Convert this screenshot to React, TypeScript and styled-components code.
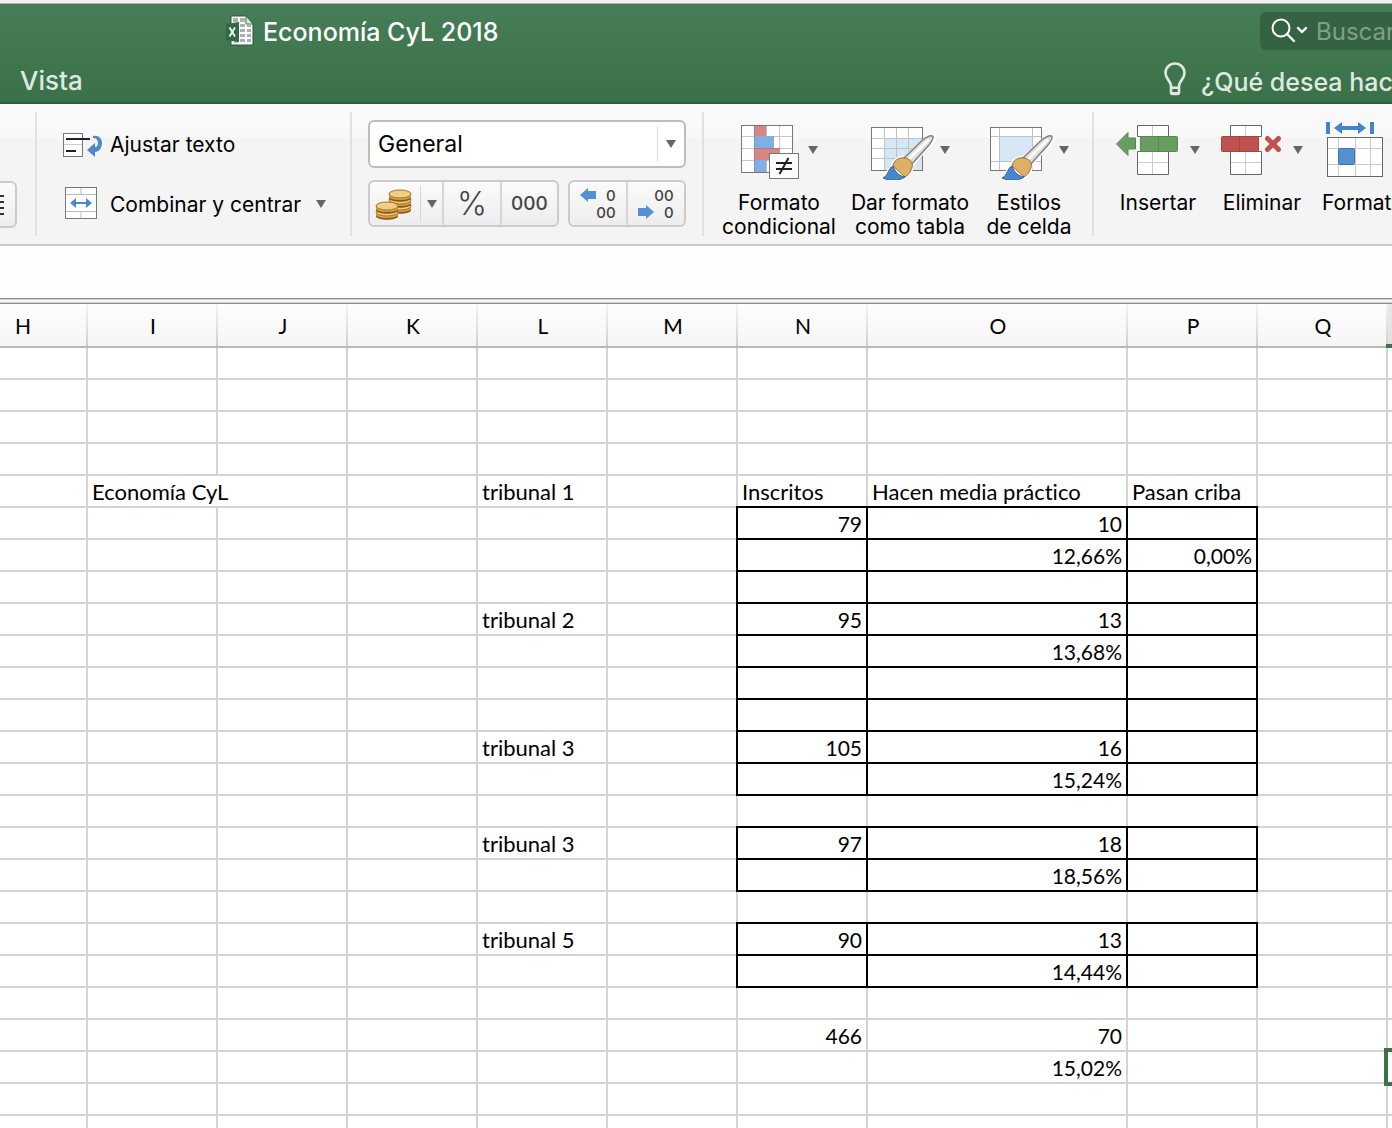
import React from "react";
import styled, { createGlobalStyle, css } from "styled-components";

const UI_FONT = `Inter, Roboto, "Liberation Sans", sans-serif`;
const SHEET_FONT = `Lato, "Open Sans", "Liberation Sans", sans-serif`;
const GRID = "#d4d4d4";
const EXCEL_GREEN = "#3c7349";

const GlobalStyle = createGlobalStyle`
  *, *::before, *::after { box-sizing: border-box; }
  body { margin: 0; background: #fff; overflow: hidden; }
  button, input, select { font: inherit; color: inherit; margin: 0; }
  svg { display: block; flex: none; }
`;

const Window = styled.div`
  display: flex;
  flex-direction: column;
  height: 100vh;
  overflow: hidden;
  font-family: ${UI_FONT};
  color: #000;
`;

/* ---------- title bar ---------- */

const Header = styled.header`
  flex: none;
  border-bottom: 2px solid #2d5c39;
  background: linear-gradient(#467e58, #3b7148);
  color: #fff;
  overflow: hidden;

  &::before {
    content: "";
    display: block;
    height: 4px;
    background: #f1f1f1;
    border-bottom: 1px solid #a9b5ac;
  }
`;

const TitleRow = styled.div`
  display: flex;
  align-items: center;
  height: 53px;
  padding-left: 226px;
`;

const Title = styled.h1`
  margin: 0 0 0 9px;
  padding-top: 2px;
  font-size: 25px;
  font-weight: 500;
  line-height: 32px;
  white-space: nowrap;
`;

const Search = styled.label`
  display: flex;
  align-items: center;
  flex: none;
  width: 132px;
  height: 38px;
  margin-left: auto;
  padding-left: 11px;
  border-radius: 6px 0 0 6px;
  background: #356342;
  overflow: hidden;
`;

const SearchInput = styled.input`
  width: 76px;
  margin-left: 8px;
  padding: 2px 0 0;
  border: 0;
  outline: 0;
  background: transparent;
  font-size: 24px;
  &::placeholder { color: #809f88; opacity: 1; }
`;

const TabRow = styled.div`
  display: flex;
  align-items: center;
  justify-content: space-between;
  height: 45px;
  padding-left: 20px;
`;

const Tab = styled.button`
  padding: 2px 0 0;
  border: 0;
  background: none;
  color: #dfe9e1;
  font-size: 26px;
  font-weight: 500;
  line-height: 32px;
`;

const TellMe = styled.button`
  display: flex;
  align-items: center;
  gap: 14px;
  width: 229px;
  padding: 0;
  border: 0;
  background: none;
  color: #dfe9e1;
  font-size: 25px;
  font-weight: 500;
  line-height: 32px;
  white-space: nowrap;
  overflow: hidden;
`;

const TellMeText = styled.span`
  padding-top: 4px;
`;

/* ---------- ribbon ---------- */

const Ribbon = styled.div`
  display: flex;
  flex: none;
  height: 142px;
  padding: 8px 0;
  border-bottom: 2px solid #cacaca;
  background: linear-gradient(#fafafa, #f8f8f8 33px, #f4f4f4 34px);
  overflow: hidden;
`;

const Group = styled.section<{ $width?: number; $pad?: number }>`
  flex: none;
  width: ${(p) => (p.$width ? `${p.$width}px` : "auto")};
  padding: 8px 0 0 ${(p) => p.$pad ?? 0}px;
  border-right: 2px solid #e1e1e1;
  &:last-child { border-right: 0; }
`;

const ClippedGroup = styled(Group)`
  display: flex;
  align-items: flex-end;
  justify-content: flex-end;
  padding: 0 18px 8px 0;
`;

const buttonFace = css`
  border: 2px solid #cbcbcb;
  border-radius: 6px;
  background: linear-gradient(#fbfbfb, #ededed);
`;

const AlignButton = styled.button`
  ${buttonFace}
  display: flex;
  align-items: center;
  justify-content: flex-end;
  flex: none;
  width: 58px;
  height: 47px;
  padding: 0 11px 0 0;
`;

const CommandRow = styled.button`
  display: grid;
  grid-template-columns: 47px auto auto;
  align-items: center;
  justify-content: start;
  height: 48px;
  margin-bottom: 12px;
  padding: 0;
  border: 0;
  background: none;
  font-size: 21px;
  line-height: 24px;
  white-space: nowrap;
`;

const CommandText = styled.span`
  padding-top: 2px;
`;

const RowArrow = styled.span`
  margin-left: 15px;
`;

const SelectBox = styled.label`
  position: relative;
  display: block;
  width: 318px;
  height: 48px;
  border: 2px solid #bdbdbd;
  border-radius: 6px;
  background: #fff;
`;

const FormatSelect = styled.select`
  width: 100%;
  height: 100%;
  padding: 0 40px 0 8px;
  border: 0;
  outline: 0;
  appearance: none;
  background: transparent;
  font-size: 23px;
`;

const SelectArrow = styled.span`
  position: absolute;
  top: 4px;
  right: 0;
  bottom: 4px;
  display: flex;
  align-items: center;
  width: 27px;
  padding-left: 8px;
  border-left: 1px solid #dcdcdc;
  pointer-events: none;
`;

const NumberRow = styled.div`
  display: flex;
  gap: 9px;
  margin-top: 12px;
`;

const Segments = styled.div`
  ${buttonFace}
  display: flex;
  height: 47px;
  overflow: hidden;
`;

const Segment = styled.button<{ $width: number; $percent?: boolean }>`
  display: flex;
  align-items: center;
  justify-content: center;
  width: ${(p) => p.$width}px;
  height: 100%;
  padding: 0;
  border: 0;
  border-left: 2px solid #d6d6d6;
  background: none;
  color: #444;
  font-size: ${(p) => (p.$percent ? 32 : 19)}px;
  font-weight: ${(p) => (p.$percent ? 300 : 500)};
  line-height: 24px;
  &:first-child { border-left: 0; }
`;

const MoneyDivider = styled.span`
  width: 1px;
  height: 36px;
  margin: 0 6px 0 8px;
  background: #d6d6d6;
`;

const Decimals = styled.span`
  display: grid;
  grid-template-columns: 16px auto;
  column-gap: 0;
  align-items: center;
  justify-items: end;
  font-size: 15px;
  line-height: 17px;
`;

const BigButtons = styled.div`
  display: flex;
  align-items: flex-start;
`;

const BigButton = styled.button<{ $width: number; $left?: boolean }>`
  display: flex;
  flex: none;
  flex-direction: column;
  align-items: ${(p) => (p.$left ? "flex-start" : "center")};
  gap: 11px;
  width: ${(p) => p.$width}px;
  padding: 0 0 0 ${(p) => (p.$left ? 8 : 0)}px;
  border: 0;
  background: none;
  font-size: 21px;
  line-height: 24px;
  white-space: pre-line;
  text-align: center;
`;

const IconRow = styled.span<{ $gap: number; $inset?: number }>`
  display: flex;
  align-items: center;
  gap: ${(p) => p.$gap}px;
  padding-left: ${(p) => p.$inset ?? 0}px;
`;

/* ---------- sheet ---------- */

const FormulaBar = styled.div`
  flex: none;
  height: 52px;
  background: linear-gradient(#fff 9px, #fdfdfd 9px);
`;

const Splitter = styled.div`
  flex: none;
  height: 6px;
  border-top: 1px solid #8f8f8f;
  border-bottom: 1px solid #8f8f8f;
  background: linear-gradient(#cfcfcf 1px, #f8f8f8 1px, #f8f8f8 3px, #d2d2d2 3px);
`;

const Sheet = styled.main`
  flex: 1;
  min-height: 0;
  overflow: hidden;
`;

/* The sheet is scrolled part of the way through column H. */
const Table = styled.table`
  width: 1560px;
  margin-left: -42px;
  border-spacing: 0;
  table-layout: fixed;
  font-family: ${SHEET_FONT};
  font-size: 22px;
  font-variant-ligatures: none;
  line-height: 24px;
  color: #000;
`;

const ColumnHead = styled.th<{ $active?: boolean }>`
  position: relative;
  height: 44px;
  padding: 2px 0 0;
  border-bottom: 2px solid #b9b9b9;
  background:
    linear-gradient(#f4f4f4, #cfcfcf) right / 2px 100% no-repeat,
    ${(p) => (p.$active ? "linear-gradient(#e8e8e8, #e0e0e0)" : "linear-gradient(#fdfdfd, #f6f6f6)")};
  font-size: 21px;
  font-weight: 400;

  ${(p) =>
    p.$active &&
    css`
      &::after {
        content: "";
        position: absolute;
        right: 0;
        bottom: -2px;
        left: -2px;
        height: 4px;
        background: ${EXCEL_GREEN};
      }
    `}
`;

const Cell = styled.td<{ $boxed?: boolean; $number?: boolean; $selected?: boolean }>`
  position: relative;
  height: 32px;
  padding: 2px 4px 0;
  border: 0 solid ${GRID};
  border-width: 0 2px 2px 0;
  font-size: ${(p) => (p.$number ? 21 : 22)}px;
  text-align: ${(p) => (p.$number ? "right" : "left")};
  white-space: nowrap;

  ${(p) =>
    p.$boxed &&
    css`
      border-color: #000;
      box-shadow: -2px 0 #000, 0 -2px #000, -2px -2px #000;
    `}

  ${(p) =>
    p.$selected &&
    css`
      &::after {
        content: "";
        position: absolute;
        inset: -4px;
        z-index: 1;
        border: 4px solid ${EXCEL_GREEN};
      }
    `}
`;

/* ---------- icons ---------- */

const Arrow = () => (
  <svg width="10" height="8" viewBox="0 0 10 8" aria-hidden="true">
    <path d="M0 0h10L5 8z" fill="#666" />
  </svg>
);

const WorkbookIcon = () => (
  <svg width="28" height="32" viewBox="0 0 28 32" aria-hidden="true">
    <path d="M5 1h15l7 8v21H5z" fill="#fff" stroke="#2c5236" />
    <path d="M20 1v8h7z" fill="#dfe8e1" stroke="#3c6b48" />
    <path d="M7 3h5v4H7zM14 3h5v4h-5zM14 9h5v3h-5zM14 14h5v3h-5zM21 14h4v3h-4zM14 19h5v3h-5zM21 19h4v3h-4zM14 24h5v3h-5zM21 24h4v3h-4zM21 10h4v2h-4zM8 26h4v2H8z" fill="#a9b3ab" />
    <path d="M0 9l13-2v20L0 25z" fill="#2f6a42" />
    <path d="M3.500 12.500l5.500 9M9 12.500l-5.500 9" stroke="#fff" strokeWidth="1.800" />
  </svg>
);

const SearchIcon = () => (
  <svg width="37" height="26" viewBox="0 0 37 26" fill="none" stroke="#fff" aria-hidden="true">
    <circle cx="10" cy="10" r="8.500" strokeWidth="2" />
    <path d="M16 16l7 7" strokeWidth="2.400" strokeLinecap="round" />
    <path d="M27 10l4 4 4-4" strokeWidth="2.400" strokeLinecap="round" strokeLinejoin="round" />
  </svg>
);

const BulbIcon = () => (
  <svg width="24" height="36" viewBox="0 0 24 36" fill="none" aria-hidden="true">
    <path
      d="M8 24C8 19 2.500 17 2.500 11a9.500 9.500 0 0 1 19 0C21.500 17 16 19 16 24v6.500a1.500 1.500 0 0 1-1.500 1.500h-5A1.500 1.500 0 0 1 8 30.500z"
      stroke="#dfe9e1"
      strokeWidth="2.600"
    />
    <path d="M8 24.500h8V27H8zM9 30h6v2H9z" fill="#dfe9e1" />
  </svg>
);

const AlignIcon = () => (
  <svg width="24" height="22" viewBox="0 0 24 22" stroke="#333" strokeWidth="2" aria-hidden="true">
    <path d="M0 2h24M4 8h20M0 14h24M4 20h20" />
  </svg>
);

const WrapIcon = () => (
  <svg width="40" height="28" viewBox="0 0 40 28" fill="none" aria-hidden="true">
    <rect x=".5" y="3.500" width="19" height="23" fill="#fff" stroke="#777" />
    <path d="M1 14.500h18" stroke="#ccc" />
    <path d="M3 9h24M3 21h10" stroke="#222" strokeWidth="2" />
    <path d="M30 6c6-1 9 3 9 7 0 5-3 9-7 9v5l-8-7 8-7v4c2 0 3-2 3-4 0-3-2-5-5-5z" fill="#4c8acb" />
  </svg>
);

const MergeIcon = () => (
  <svg width="36" height="34" viewBox="-2 0 36 34" fill="none" aria-hidden="true">
    <rect x=".5" y=".5" width="31" height="31" fill="#fff" stroke="#777" />
    <path d="M1 7.500h30M1 24.500h30M16 1v6M16 25v6" stroke="#bbb" />
    <path d="M5 16l6-5v4h10v-4l6 5-6 5v-4H11v4z" fill="#4c8acb" />
  </svg>
);

const Coin = ({ x, y }: { x: number; y: number }) => (
  <g transform={`translate(${x} ${y})`}>
    <path d="M0 4v4c0 5 22 5 22 0V4z" fill="#8d5a1c" />
    <path d="M0 4v2.500c0 4.500 22 4.500 22 0V4z" fill="#d9a548" />
    <ellipse cx="11" cy="4" rx="11" ry="4" fill="#efcf86" stroke="#a97022" />
  </g>
);

const CoinsIcon = () => (
  <svg width="37" height="32" viewBox="0 0 37 32" aria-hidden="true">
    <Coin x={14} y={14} />
    <Coin x={14} y={8} />
    <Coin x={14} y={2} />
    <Coin x={1} y={20} />
    <Coin x={1} y={14} />
  </svg>
);

const SmallArrow = ({ flip }: { flip?: boolean }) => (
  <svg width="16" height="14" viewBox="0 0 16 14" aria-hidden="true">
    <path
      d="M0 7l8-7v3h8v8H8v3z"
      fill="#5590d2"
      transform={flip ? "matrix(-1 0 0 1 16 0)" : undefined}
    />
  </svg>
);

const ConditionalIcon = () => (
  <svg width="58" height="60" viewBox="0 0 58 60" aria-hidden="true">
    <rect x=".5" y="5.500" width="51" height="47" fill="#fff" stroke="#777" />
    <path d="M13.500 6v46M38.500 6v46M1 16.500h50M1 28.500h50M1 40.500h50" stroke="#c8c8c8" />
    <path d="M13 6h12v10H13zM13 28h26v12H13z" fill="#d98583" />
    <path d="M13 16h20v12H13zM13 40h12v12H13z" fill="#7eb0e4" />
    <path d="M13.500 6v46M13 28.500h26M25.500 6v10M25.500 40v12" stroke="#8a6f86" strokeOpacity=".5" />
    <rect x="28.500" y="33.500" width="29" height="25" fill="#fcfcfc" stroke="#777" />
    <path d="M35 43h16M35 49h16M47.500 38l-9 16" stroke="#222" strokeWidth="2" />
  </svg>
);

const Brush = () => (
  <>
    <path
      d="M64 17c-2-2-7 1-11 4L35 37c-7 0-11 3-13 9-4 3-3 8-9 12 7 4 18 3 23-1 4-3 7-7 6-12L60 25c3-3 5-6 4-8z"
      fill="#fff"
      stroke="#fff"
      strokeWidth="3"
    />
    <path d="M63 16.500c-2-2-7 1-11 4L34 38l7 7 18-20c3-4 5-7 4-8.500z" fill="#dedede" stroke="#808080" strokeWidth="1.500" />
    <path d="M59 19.500L38 40" stroke="#fff" strokeWidth="3" />
    <path d="M23 46c1-6 6-9 12-8 7 1 9 7 6 12-1 3-3 5-6 7z" fill="#deb067" stroke="#9a6f30" />
    <path d="M23 46c-5 2-4 9-10 12 6 3 17 3 22-1-6-1-10-5-12-11z" fill="#4a86cc" stroke="#2c62a3" />
  </>
);

const TableStyleIcon = () => (
  <svg width="66" height="60" viewBox="0 0 66 60" aria-hidden="true">
    <rect x="1.500" y="7.500" width="51" height="43" fill="#fff" stroke="#777" />
    <path d="M14 18h38v32H14z" fill="#d6e6f4" />
    <path d="M14.500 8v42M26.500 8v42M38.500 8v42M2 18.500h50M2 28.500h50M2 38.500h50" stroke="#bcc3c9" />
    <Brush />
  </svg>
);

const CellStyleIcon = () => (
  <svg width="66" height="60" viewBox="0 0 66 60" aria-hidden="true">
    <rect x="1.500" y="7.500" width="51" height="43" fill="#fff" stroke="#777" />
    <path d="M10 16h34v25H10z" fill="#d6e6f4" />
    <path d="M10.500 8v42M43.500 8v42M2 16.500h50M2 41.500h50" stroke="#bcc3c9" />
    <Brush />
  </svg>
);

const SplitTable = ({ x }: { x: number }) => (
  <g transform={`translate(${x} 0)`}>
    <path d="M.5 5.500h31v11H.5zM.5 31.500h31v23H.5z" fill="#fff" stroke="#666" />
    <path d="M15.500 6v10M15.500 32v22M1 42.500h30" stroke="#ccc" />
  </g>
);

const InsertIcon = () => (
  <svg width="62" height="60" viewBox="0 0 62 60" aria-hidden="true">
    <SplitTable x={21} />
    <path d="M.5 24L12 12.500V18h7.500v11H12v6.500z" fill="#6a9d62" stroke="#558a4e" />
    <rect x="24.500" y="16.500" width="37" height="15" rx="1" fill="#6a9d62" stroke="#558a4e" />
    <path d="M42.500 17v14" stroke="#558a4e" />
  </svg>
);

const DeleteIcon = () => (
  <svg width="60" height="60" viewBox="0 0 60 60" aria-hidden="true">
    <SplitTable x={9} />
    <rect x=".5" y="16.500" width="37" height="15" rx="1" fill="#bd5350" stroke="#a54340" />
    <path d="M18.500 17v14" stroke="#a54340" />
    <path d="M46.500 18.500l11 11M57.500 18.500l-11 11" stroke="#bd5350" strokeWidth="5" strokeLinecap="round" />
  </svg>
);

const CellSizeIcon = () => (
  <svg width="58" height="60" viewBox="0 0 58 60" aria-hidden="true">
    <path d="M0 2h4v12H0zM44 2h4v12h-4zM8 8l8-6v4h16V2l8 6-8 6v-4H16v4z" fill="#4385cb" />
    <rect x="1.500" y="17.500" width="55" height="39" fill="#fff" stroke="#666" />
    <path d="M12.500 18v38M29.500 18v38M44.500 18v38M2 28.500h54M2 44.500h54" stroke="#ccc" />
    <rect x="12.500" y="28.500" width="16" height="16" rx="1" fill="#5590d0" stroke="#3974b6" />
  </svg>
);

/* ---------- data ---------- */

const COLUMNS = ["H", "I", "J", "K", "L", "M", "N", "O", "P", "Q", "R"];
const ROW_COUNT = 25;

const VALUES: Record<string, string> = {
  I5: "Economía CyL",
  L5: "tribunal 1",
  N5: "Inscritos",
  O5: "Hacen media práctico",
  P5: "Pasan criba",
  N6: "79",
  O6: "10",
  O7: "12,66%",
  P7: "0,00%",
  L9: "tribunal 2",
  N9: "95",
  O9: "13",
  O10: "13,68%",
  L13: "tribunal 3",
  N13: "105",
  O13: "16",
  O14: "15,24%",
  L16: "tribunal 3",
  N16: "97",
  O16: "18",
  O17: "18,56%",
  L19: "tribunal 5",
  N19: "90",
  O19: "13",
  O20: "14,44%",
  N22: "466",
  O22: "70",
  O23: "15,02%",
};

const BOXED_ROWS: [number, number][] = [[6, 14], [16, 17], [19, 20]];

const isBoxed = (column: string, row: number) =>
  "NOP".includes(column) && BOXED_ROWS.some(([from, to]) => row >= from && row <= to);

const Grid = () => (
  <Table>
    <colgroup>
      {COLUMNS.map((c) => (
        <col key={c} style={{ width: c === "O" ? 260 : 130 }} />
      ))}
    </colgroup>
    <thead>
      <tr>
        {COLUMNS.map((c) =>
          c === "R" ? (
            <ColumnHead key={c} scope="col" aria-label={c} $active />
          ) : (
            <ColumnHead key={c} scope="col">
              {c}
            </ColumnHead>
          )
        )}
      </tr>
    </thead>
    <tbody>
      {Array.from({ length: ROW_COUNT }, (_, i) => i + 1).map((row) => (
        <tr key={row}>
          {COLUMNS.filter((c) => !(row === 5 && c === "J")).map((c) => {
            const value = VALUES[c + row];
            return (
              <Cell
                key={c}
                colSpan={row === 5 && c === "I" ? 2 : undefined}
                $boxed={isBoxed(c, row)}
                $number={!!value && /^\d/.test(value)}
                $selected={c === "R" && row === 23}
              >
                {value}
              </Cell>
            );
          })}
        </tr>
      ))}
    </tbody>
  </Table>
);

export default function App() {
  return (
    <Window>
      <GlobalStyle />
      <Header>
        <TitleRow>
          <WorkbookIcon />
          <Title>Economía CyL 2018</Title>
          <Search>
            <SearchIcon />
            <SearchInput type="text" placeholder="Buscar" aria-label="Buscar" />
          </Search>
        </TitleRow>
        <TabRow>
          <Tab type="button">Vista</Tab>
          <TellMe type="button">
            <BulbIcon />
            <TellMeText>¿Qué desea hac</TellMeText>
          </TellMe>
        </TabRow>
      </Header>

      <Ribbon>
        <ClippedGroup $width={37}>
          <AlignButton type="button" aria-label="Alinear">
            <AlignIcon />
          </AlignButton>
        </ClippedGroup>

        <Group $width={315} $pad={26}>
          <CommandRow type="button">
            <WrapIcon />
            <CommandText>Ajustar texto</CommandText>
          </CommandRow>
          <CommandRow type="button">
            <MergeIcon />
            <CommandText>Combinar y centrar</CommandText>
            <RowArrow>
              <Arrow />
            </RowArrow>
          </CommandRow>
        </Group>

        <Group $width={352} $pad={16}>
          <SelectBox>
            <FormatSelect aria-label="Formato de número" defaultValue="General">
              <option>General</option>
            </FormatSelect>
            <SelectArrow>
              <Arrow />
            </SelectArrow>
          </SelectBox>
          <NumberRow>
            <Segments>
              <Segment type="button" $width={72} aria-label="Moneda">
                <CoinsIcon />
                <MoneyDivider />
                <Arrow />
              </Segment>
              <Segment type="button" $width={58} $percent>
                %
              </Segment>
              <Segment type="button" $width={57}>
                000
              </Segment>
            </Segments>
            <Segments>
              <Segment type="button" $width={56}>
                <Decimals>
                  <SmallArrow />
                  <span>0</span>
                  <span />
                  <span>00</span>
                </Decimals>
              </Segment>
              <Segment type="button" $width={58}>
                <Decimals>
                  <span />
                  <span>00</span>
                  <SmallArrow flip />
                  <span>0</span>
                </Decimals>
              </Segment>
            </Segments>
          </NumberRow>
        </Group>

        <Group $width={390} $pad={11}>
          <BigButtons>
            <BigButton type="button" $width={128}>
              <IconRow $gap={9}>
                <ConditionalIcon />
                <Arrow />
              </IconRow>
              {"Formato\ncondicional"}
            </BigButton>
            <BigButton type="button" $width={134}>
              <IconRow $gap={4}>
                <TableStyleIcon />
                <Arrow />
              </IconRow>
              {"Dar formato\ncomo tabla"}
            </BigButton>
            <BigButton type="button" $width={104}>
              <IconRow $gap={4}>
                <CellStyleIcon />
                <Arrow />
              </IconRow>
              {"Estilos\nde celda"}
            </BigButton>
          </BigButtons>
        </Group>

        <Group $pad={12}>
          <BigButtons>
            <BigButton type="button" $width={104}>
              <IconRow $gap={12}>
                <InsertIcon />
                <Arrow />
              </IconRow>
              Insertar
            </BigButton>
            <BigButton type="button" $width={104}>
              <IconRow $gap={12}>
                <DeleteIcon />
                <Arrow />
              </IconRow>
              Eliminar
            </BigButton>
            <BigButton type="button" $width={78} $left>
              <IconRow $gap={12} $inset={4}>
                <CellSizeIcon />
              </IconRow>
              Format
            </BigButton>
          </BigButtons>
        </Group>
      </Ribbon>

      <FormulaBar />
      <Splitter />
      <Sheet>
        <Grid />
      </Sheet>
    </Window>
  );
}
